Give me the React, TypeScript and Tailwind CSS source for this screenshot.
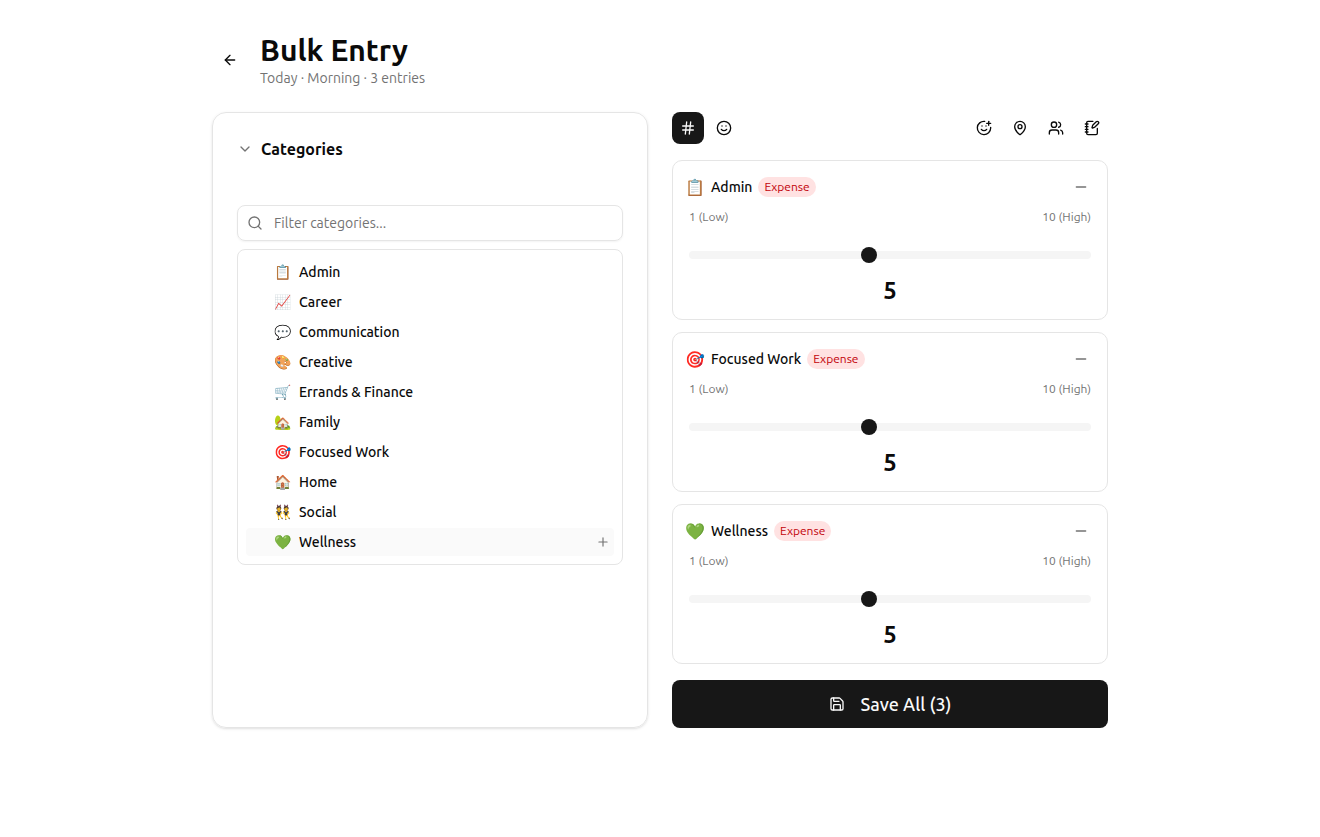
import { useState } from 'react';
import {
  ArrowLeft,
  ChevronDown,
  Hash,
  MapPin,
  Minus,
  NotebookPen,
  Plus,
  Save,
  Search,
  Smile,
  SmilePlus,
  Users,
} from 'lucide-react';

interface Category {
  name: string;
  emoji: string;
}

interface Entry extends Category {
  value: number;
}

const CATEGORIES: Category[] = [
  { name: 'Admin', emoji: '📋' },
  { name: 'Career', emoji: '📈' },
  { name: 'Communication', emoji: '💬' },
  { name: 'Creative', emoji: '🎨' },
  { name: 'Errands & Finance', emoji: '🛒' },
  { name: 'Family', emoji: '🏡' },
  { name: 'Focused Work', emoji: '🎯' },
  { name: 'Home', emoji: '🏠' },
  { name: 'Social', emoji: '👯' },
  { name: 'Wellness', emoji: '💚' },
];

const INITIAL_ENTRIES: Entry[] = [
  { name: 'Admin', emoji: '📋', value: 5 },
  { name: 'Focused Work', emoji: '🎯', value: 5 },
  { name: 'Wellness', emoji: '💚', value: 5 },
];

const TOOLS = [
  { label: 'Add emotion', Icon: SmilePlus },
  { label: 'Add location', Icon: MapPin },
  { label: 'Add people', Icon: Users },
  { label: 'Add note', Icon: NotebookPen },
];

interface EntryCardProps {
  entry: Entry;
  onChange: (value: number) => void;
  onRemove: () => void;
}

function EntryCard({ entry, onChange, onRemove }: EntryCardProps) {
  return (
    <div className="rounded-[10px] border border-neutral-200 p-3">
      <div className="flex h-7 items-center justify-between">
        <div className="flex items-center gap-1.5">
          <span className="w-5 text-center text-base leading-6">{entry.emoji}</span>
          <span className="text-sm font-medium">{entry.name}</span>
          <span className="rounded-full bg-red-100 px-1.5 py-0.5 text-xs text-red-700">Expense</span>
        </div>
        <button
          type="button"
          onClick={onRemove}
          aria-label={`Remove ${entry.name}`}
          className="flex size-7 items-center justify-center rounded-lg text-neutral-500 hover:bg-neutral-100"
        >
          <Minus className="size-4" />
        </button>
      </div>

      <div className="mt-2 px-1">
        <div className="flex justify-between text-xs text-neutral-500">
          <span>1 (Low)</span>
          <span>10 (High)</span>
        </div>
        <div className="flex pt-[22px] pb-3">
          <input
            type="range"
            min={1}
            max={10}
            value={entry.value}
            onChange={(e) => onChange(Number(e.target.value))}
            aria-label={`${entry.name} intensity`}
            className="h-4 w-full cursor-pointer appearance-none bg-transparent [&::-webkit-slider-runnable-track]:h-2 [&::-webkit-slider-runnable-track]:rounded-full [&::-webkit-slider-runnable-track]:bg-neutral-100 [&::-webkit-slider-thumb]:-mt-1 [&::-webkit-slider-thumb]:size-4 [&::-webkit-slider-thumb]:appearance-none [&::-webkit-slider-thumb]:rounded-full [&::-webkit-slider-thumb]:bg-neutral-900"
          />
        </div>
        <div className="text-center text-2xl font-bold">{entry.value}</div>
      </div>
    </div>
  );
}

export default function App() {
  const [filter, setFilter] = useState('');
  const [isOpen, setIsOpen] = useState(true);
  const [mode, setMode] = useState<'number' | 'emoji'>('number');
  const [entries, setEntries] = useState(INITIAL_ENTRIES);

  const visible = CATEGORIES.filter((c) => c.name.toLowerCase().includes(filter.toLowerCase()));

  const handleAdd = (category: Category) => {
    setEntries((prev) => [...prev, { ...category, value: 5 }]);
  };

  const handleChange = (index: number, value: number) => {
    setEntries((prev) => prev.map((e, i) => (i === index ? { ...e, value } : e)));
  };

  const handleRemove = (index: number) => {
    setEntries((prev) => prev.filter((_, i) => i !== index));
  };

  const modeClass = (active: boolean) =>
    active
      ? 'flex size-8 items-center justify-center rounded-lg bg-neutral-900 text-neutral-50'
      : 'flex size-8 items-center justify-center rounded-lg hover:bg-neutral-100';

  return (
    <main className="min-h-screen bg-white px-4 py-8 font-['Ubuntu','Noto_Sans',sans-serif] text-neutral-950">
      <div className="mx-auto max-w-4xl">
        {/* Header */}
        <header className="mb-6 flex items-center gap-3">
          <button
            type="button"
            aria-label="Back"
            className="flex size-9 items-center justify-center rounded-lg hover:bg-neutral-100"
          >
            <ArrowLeft className="size-4" />
          </button>
          <div>
            <h1 className="text-3xl font-bold">Bulk Entry</h1>
            <p className="text-sm text-neutral-500">Today · Morning · {entries.length} entries</p>
          </div>
        </header>

        <div className="grid gap-6 md:grid-cols-2">
          {/* Categories */}
          <section className="rounded-[14px] border border-neutral-200 p-6 shadow-sm">
            <button
              type="button"
              onClick={() => setIsOpen(!isOpen)}
              aria-expanded={isOpen}
              className="flex items-center gap-2 font-semibold"
            >
              <ChevronDown className="size-4 text-neutral-500" />
              Categories
            </button>

            {isOpen && (
              <div className="mt-11">
                <label className="flex h-9 items-center gap-[11px] rounded-lg border border-neutral-200 px-[9px] shadow-xs">
                  <Search className="size-4 shrink-0 text-neutral-500" />
                  <input
                    type="text"
                    value={filter}
                    onChange={(e) => setFilter(e.target.value)}
                    placeholder="Filter categories..."
                    aria-label="Filter categories"
                    className="min-w-0 flex-1 bg-transparent text-sm outline-none placeholder:text-neutral-500"
                  />
                </label>

                <ul className="mt-2 flex flex-col gap-0.5 rounded-lg border border-neutral-200 p-2">
                  {visible.map((category) => {
                    const active = category.name === 'Wellness';
                    return (
                      <li key={category.name}>
                        <button
                          type="button"
                          onClick={() => handleAdd(category)}
                          className={
                            active
                              ? 'flex h-7 w-full items-center gap-2 rounded-sm bg-neutral-50 pr-1 pl-7'
                              : 'flex h-7 w-full items-center gap-2 rounded-sm pr-1 pl-7 hover:bg-neutral-50'
                          }
                        >
                          <span className="flex w-[17px] text-sm">{category.emoji}</span>
                          <span className="flex-1 text-left text-sm font-medium">{category.name}</span>
                          {active && <Plus className="size-3.5 text-neutral-500" />}
                        </button>
                      </li>
                    );
                  })}
                </ul>
              </div>
            )}
          </section>

          {/* Entries */}
          <section className="flex flex-col gap-4">
            <div className="flex items-center justify-between">
              <div className="flex gap-1">
                <button
                  type="button"
                  onClick={() => setMode('number')}
                  aria-label="Number scale"
                  className={modeClass(mode === 'number')}
                >
                  <Hash className="size-4" />
                </button>
                <button
                  type="button"
                  onClick={() => setMode('emoji')}
                  aria-label="Emoji scale"
                  className={modeClass(mode === 'emoji')}
                >
                  <Smile className="size-4" />
                </button>
              </div>
              <div className="flex gap-1">
                {TOOLS.map(({ label, Icon }) => (
                  <button
                    key={label}
                    type="button"
                    aria-label={label}
                    className="flex size-8 items-center justify-center rounded-lg hover:bg-neutral-100"
                  >
                    <Icon className="size-4" />
                  </button>
                ))}
              </div>
            </div>

            <div className="flex flex-col gap-3">
              {entries.map((entry, index) => (
                <EntryCard
                  key={index}
                  entry={entry}
                  onChange={(value) => handleChange(index, value)}
                  onRemove={() => handleRemove(index)}
                />
              ))}
            </div>

            <button
              type="button"
              className="flex h-12 w-full items-center justify-center gap-4 rounded-lg bg-neutral-900 text-lg font-medium text-neutral-50 hover:bg-neutral-800"
            >
              <Save className="size-4" />
              Save All ({entries.length})
            </button>
          </section>
        </div>
      </div>
    </main>
  );
}
